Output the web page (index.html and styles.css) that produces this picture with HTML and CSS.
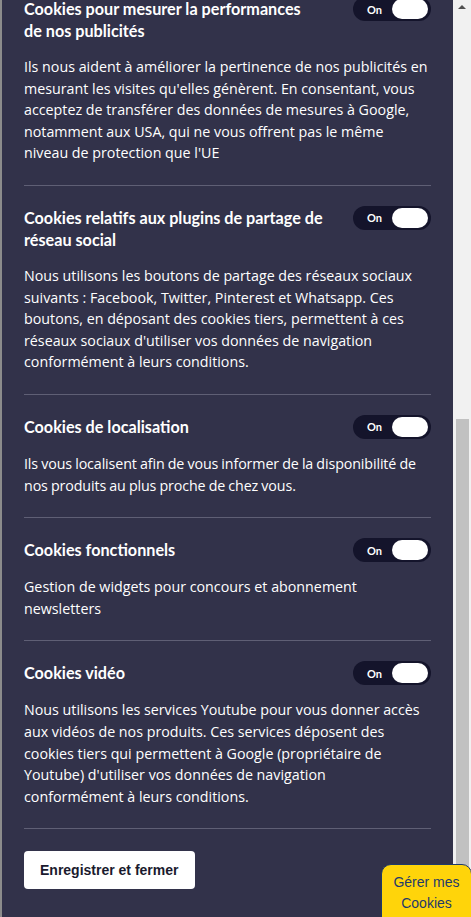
FILE: index.html
```html
<!DOCTYPE html>
<html lang="fr">
<head>
    <meta charset="UTF-8">
    <title>Gestion des cookies</title>
    <link rel="stylesheet" href="styles.css">
</head>
<body>
    <div class="edge"></div>
    <div class="panel">
        <div class="list">
            <div class="item">
                <div class="head">
                    <h3>Cookies pour mesurer la performances de&nbsp;nos publicités</h3>
                    <span class="toggle"><span class="label">On</span><span class="knob"></span></span>
                </div>
                <p>Ils nous aident à améliorer la pertinence de nos publicités en mesurant les visites qu'elles génèrent. En consentant, vous acceptez de transférer des données de mesures à Google, notamment aux USA, qui ne vous offrent pas le même niveau de protection que l'UE</p>
            </div>
            <div class="item">
                <div class="head">
                    <h3>Cookies relatifs aux plugins de partage de réseau social</h3>
                    <span class="toggle"><span class="label">On</span><span class="knob"></span></span>
                </div>
                <p>Nous utilisons les boutons de partage des réseaux sociaux suivants : Facebook, Twitter, Pinterest et Whatsapp. Ces boutons, en déposant des cookies tiers, permettent à ces réseaux sociaux d'utiliser vos données de navigation conformément à leurs conditions.</p>
            </div>
            <div class="item">
                <div class="head">
                    <h3>Cookies de localisation</h3>
                    <span class="toggle"><span class="label">On</span><span class="knob"></span></span>
                </div>
                <p class="tight">Ils vous localisent afin de vous informer de la disponibilité de nos produits au plus proche de chez vous.</p>
            </div>
            <div class="item">
                <div class="head">
                    <h3>Cookies fonctionnels</h3>
                    <span class="toggle"><span class="label">On</span><span class="knob"></span></span>
                </div>
                <p>Gestion de widgets pour concours et abonnement newsletters</p>
            </div>
            <div class="item">
                <div class="head">
                    <h3>Cookies vidéo</h3>
                    <span class="toggle"><span class="label">On</span><span class="knob"></span></span>
                </div>
                <p>Nous utilisons les services Youtube pour vous donner accès aux vidéos de nos produits. Ces services déposent des cookies tiers qui permettent à Google (propriétaire de Youtube) d'utiliser vos données de navigation conformément&nbsp;à leurs conditions.</p>
            </div>
            <div class="actions">
                <button class="save">Enregistrer et fermer</button>
            </div>
        </div>
    </div>
    <div class="scrollbar">
        <span class="arrow"></span>
        <span class="thumb"></span>
    </div>
    <button class="manage">Gérer mes<br>Cookies</button>
</body>
</html>
```

FILE: styles.css
```css
html, body {
    height: 100%;
}
body {
    margin: 0;
    display: flex;
    overflow: hidden;
    background: #f1f1f1;
    font-family: "Open Sans", sans-serif;
}
.edge {
    width: 2px;
    flex-shrink: 0;
    background: #8c8c8c;
}
.panel {
    flex: 1;
    background: #32324a;
    color: #fff;
    overflow: hidden;
    padding: 0 22px 0 22px;
}
.list {
    margin-top: -23px;
}
.item {
    padding: 21px 0 21px;
    border-bottom: 1px solid #5f5f75;
}
.head {
    display: flex;
    justify-content: space-between;
    align-items: flex-start;
    gap: 20px;
}
h3 {
    margin: 0;
    max-width: 301px;
    font-family: Lato, sans-serif;
    font-weight: 700;
    font-size: 16.2px;
    line-height: 22px;
}
.toggle {
    flex-shrink: 0;
    width: 78px;
    height: 24px;
    margin-top: -1px;
    box-sizing: border-box;
    border-radius: 12px;
    background: #14142b;
    display: flex;
    align-items: center;
    justify-content: space-between;
    padding: 0 3px 0 14px;
}
.label {
    font-family: Lato, sans-serif;
    font-weight: 700;
    font-size: 11px;
}
.knob {
    width: 36px;
    height: 20px;
    border-radius: 10px;
    background: #fff;
}
p {
    margin: 14px 0 0;
    font-size: 14.28px;
    line-height: 21.6px;
}
p.tight {
    letter-spacing: -0.12px;
    word-spacing: -0.4px;
}
.actions {
    padding: 22px 0;
}
.save {
    height: 38px;
    padding: 0 16px;
    border: 0;
    border-radius: 4px;
    background: #fff;
    color: #1a1a2e;
    font-family: "Liberation Sans", Arial, sans-serif;
    font-weight: 700;
    font-size: 14px;
}
.scrollbar {
    width: 18px;
    flex-shrink: 0;
    display: flex;
    flex-direction: column;
    align-items: center;
}
.arrow {
    margin-top: 5px;
    width: 0;
    height: 0;
    border-left: 4px solid transparent;
    border-right: 4px solid transparent;
    border-bottom: 4px solid #505050;
}
.thumb {
    margin-top: 410px;
    width: 13px;
    flex: 1;
    background: #c1c1c1;
}
.manage {
    position: fixed;
    right: -1px;
    bottom: -12px;
    width: 91px;
    height: 65px;
    padding: 0 0 8px;
    border: 1px solid #1f3a6a;
    border-radius: 10px 10px 0 0;
    background: #ffd40a;
    color: #1f3a6a;
    font-family: "Liberation Sans", Arial, sans-serif;
    font-size: 14px;
    line-height: 21px;
}
```
